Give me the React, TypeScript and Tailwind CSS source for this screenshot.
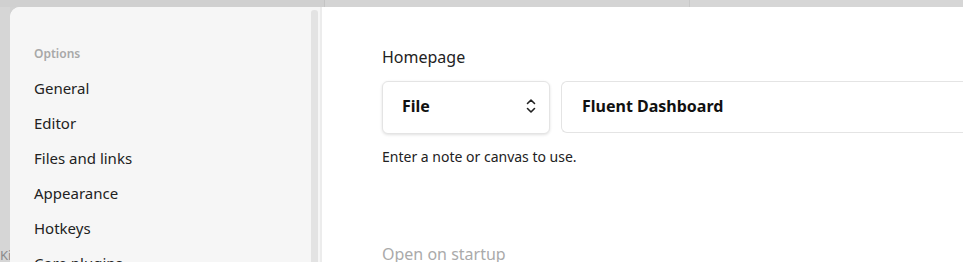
import React from "react";

const navItems = ["General", "Editor", "Files and links", "Appearance", "Hotkeys", "Core plugins"];

const UpDownIcon: React.FC = () => (
  <svg width="12" height="18" viewBox="0 0 12 18" fill="none" stroke="#222" strokeWidth="1.6" strokeLinecap="round" strokeLinejoin="round">
    <path d="M2.5 6.5 L6 3 L9.5 6.5" />
    <path d="M2.5 11.5 L6 15 L9.5 11.5" />
  </svg>
);

const Sidebar: React.FC = () => (
  <div className="flex h-full shrink-0 bg-[#f6f6f6]">
    <div className="w-[301px] pl-[24px] pt-[40px]">
      <div className="text-[12px] font-semibold text-[#a8a8a8] leading-[14px] h-[14px]">Options</div>
      <ul className="mt-[10px] flex flex-col">
        {navItems.map((item) => (
          <li key={item} className="h-[35px] flex items-center text-[15px] text-[#222]">
            {item}
          </li>
        ))}
      </ul>
    </div>
    <div className="w-[7px] mt-[3px] bg-[#e3e3e3] rounded-t-[3px]" />
    <div className="w-[2px]" />
    <div className="w-[2px] bg-[#ececec]" />
  </div>
);

const App: React.FC = () => {
  return (
    <div
      className="w-[963px] h-[262px] overflow-hidden bg-[#d2d2d2] flex flex-col"
      style={{ fontFamily: '"Noto Sans", "Open Sans", sans-serif' }}
    >
      <div className="h-[7px] flex shrink-0 bg-[#d0d0d0]">
        <div className="w-[325px] border-r border-[#c4c4c4]" />
        <div className="w-[365px] border-r border-[#c8c8c8] bg-[#d4d4d4]" />
        <div className="flex-1 bg-[#d6d6d6]" />
      </div>
      <div className="flex flex-1 min-h-0">
        <div className="w-[10px] shrink-0 bg-[#d6d6d6] relative overflow-hidden">
          <span className="absolute left-0 top-[240px] text-[13px] leading-[16px] text-[#8a8a8a]">Ki</span>
        </div>
        <div className="flex flex-1 min-w-0 rounded-tl-[10px] overflow-hidden bg-white">
          <Sidebar />
          <div className="flex-1 min-w-0 bg-white pl-[60px] pt-[38px]">
            <div className="text-[16px] text-[#222] leading-[24px]">Homepage</div>
            <div className="flex gap-[11px] mt-[12px]">
              <div className="w-[168px] shrink-0 h-[53px] rounded-[6px] border border-[#e4e4e4] shadow-[0_1px_3px_rgba(0,0,0,0.12)] flex items-center justify-between pl-[19px] pr-[12px] pb-[3px] bg-white">
                <span className="text-[16px] font-bold text-[#111]">File</span>
                <UpDownIcon />
              </div>
              <div className="flex-1 h-[52px] rounded-l-[6px] border border-r-0 border-[#e4e4e4] flex items-center pl-[20px] pb-[3px] -mr-[2px]">
                <span className="text-[16px] font-bold text-[#111]">Fluent Dashboard</span>
              </div>
            </div>
            <div className="mt-[14px] text-[14px] text-[#222] leading-[18px]">Enter a note or canvas to use.</div>
            <div className="mt-[77px] text-[16px] text-[#aaa] leading-[22px]">Open on startup</div>
          </div>
        </div>
      </div>
    </div>
  );
};

export default App;
